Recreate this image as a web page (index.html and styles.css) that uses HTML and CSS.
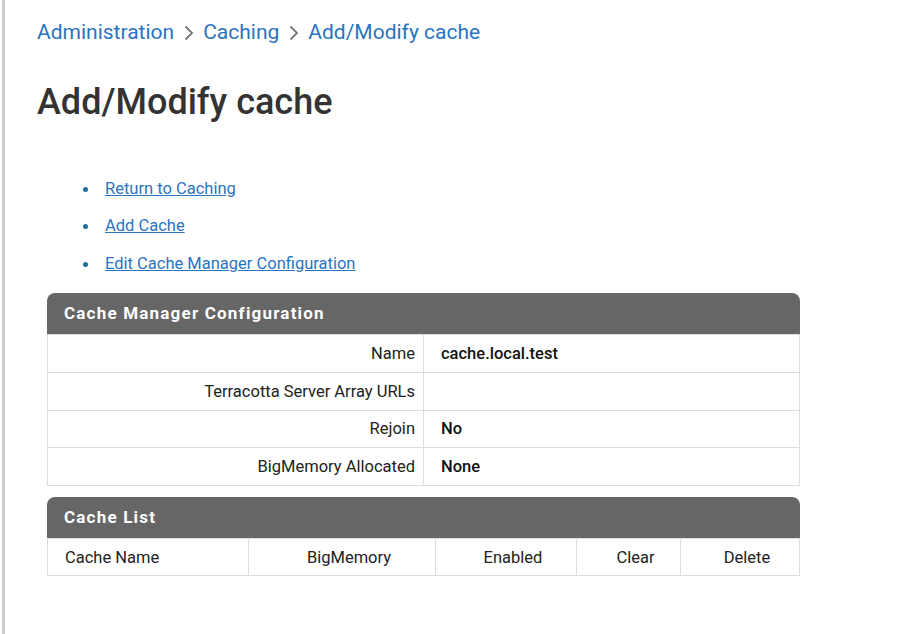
FILE: index.html
```html
<!DOCTYPE html>
<html>
<head>
<meta charset="utf-8">
<link rel="stylesheet" href="styles.css">
</head>
<body>
<div class="page">
  <nav class="crumbs">
    <a href="#">Administration</a>
    <svg class="sep" width="12" height="16" viewBox="0 0 12 16"><path d="M2.5 1.5 L9 8 L2.5 14.5" fill="none" stroke="#777" stroke-width="1.8"/></svg>
    <a href="#">Caching</a>
    <svg class="sep" width="12" height="16" viewBox="0 0 12 16"><path d="M2.5 1.5 L9 8 L2.5 14.5" fill="none" stroke="#777" stroke-width="1.8"/></svg>
    <a href="#">Add/Modify cache</a>
  </nav>
  <h1 class="title">Add/Modify cache</h1>
  <ul class="links">
    <li><a href="#">Return to Caching</a></li>
    <li><a href="#">Add Cache</a></li>
    <li><a href="#">Edit Cache Manager Configuration</a></li>
  </ul>

  <section class="panel">
    <div class="panel-head">Cache Manager Configuration</div>
    <table class="grid cfg">
      <tr><td class="lbl">Name</td><td class="val">cache.local.test</td></tr>
      <tr><td class="lbl">Terracotta Server Array URLs</td><td class="val"></td></tr>
      <tr><td class="lbl">Rejoin</td><td class="val">No</td></tr>
      <tr><td class="lbl">BigMemory Allocated</td><td class="val">None</td></tr>
    </table>
  </section>

  <section class="panel">
    <div class="panel-head">Cache List</div>
    <table class="grid list">
      <tr>
        <td class="c1">Cache Name</td>
        <td class="c2">BigMemory</td>
        <td class="c3">Enabled</td>
        <td class="c4">Clear</td>
        <td class="c5">Delete</td>
      </tr>
    </table>
  </section>
</div>
</body>
</html>
```

FILE: styles.css
```css
html, body {
  margin: 0;
  padding: 0;
  background: #fff;
}
body {
  font-family: Roboto, "Liberation Sans", sans-serif;
  color: #222;
  border-left: 3px solid #cccccc;
  margin-left: 2px;
  min-height: 634px;
  box-sizing: border-box;
}
.page {
  padding: 18px 0 0 32px;
}
.crumbs {
  display: flex;
  align-items: center;
  gap: 8.5px;
  font-size: 21px;
  line-height: 28px;
}
.crumbs a {
  color: #2a74c0;
  text-decoration: none;
}
.sep {
  margin-top: 2px;
}
.title {
  margin: 34px 0 0 0;
  font-size: 36px;
  line-height: 44px;
  font-weight: 500;
  color: #333;
}
.links {
  list-style: none;
  margin: 54px 0 0 0;
  padding: 0 0 0 68px;
  font-size: 16.5px;
  line-height: 22px;
  display: flex;
  flex-direction: column;
  gap: 15.3px;
}
.links li {
  position: relative;
}
.links li::before {
  content: "";
  position: absolute;
  left: -22px;
  top: 9px;
  width: 5px;
  height: 5px;
  border-radius: 50%;
  background: #1d6e9e;
}
.links a {
  color: #2a74c0;
}
.panel {
  width: 753px;
  margin-left: 10px;
}
.links + .panel {
  margin-top: 18.5px;
}
.panel + .panel {
  margin-top: 11px;
}
.panel-head {
  background: #666666;
  color: #fff;
  font-weight: 700;
  font-size: 17px;
  letter-spacing: 1.2px;
  height: 41px;
  line-height: 41px;
  padding-left: 17px;
  border-radius: 8px 8px 0 0;
}
.grid {
  width: 100%;
  border-collapse: collapse;
  font-size: 16.5px;
  color: #222;
}
.grid td {
  border: 1px solid #dddddd;
  height: 37.75px;
  padding: 0;
  box-sizing: border-box;
}
.cfg .lbl {
  width: 376px;
  text-align: right;
  padding-right: 8px;
}
.cfg .val {
  padding-left: 17px;
  font-weight: 500;
  color: #111;
}
.list td {
  text-align: center;
  padding-left: 14px;
  height: 37px;
}
.list .c1 { width: 201px; text-align: left; padding-left: 17px; }
.list .c2 { width: 187px; }
.list .c3 { width: 141px; }
.list .c4 { width: 104px; }
```
